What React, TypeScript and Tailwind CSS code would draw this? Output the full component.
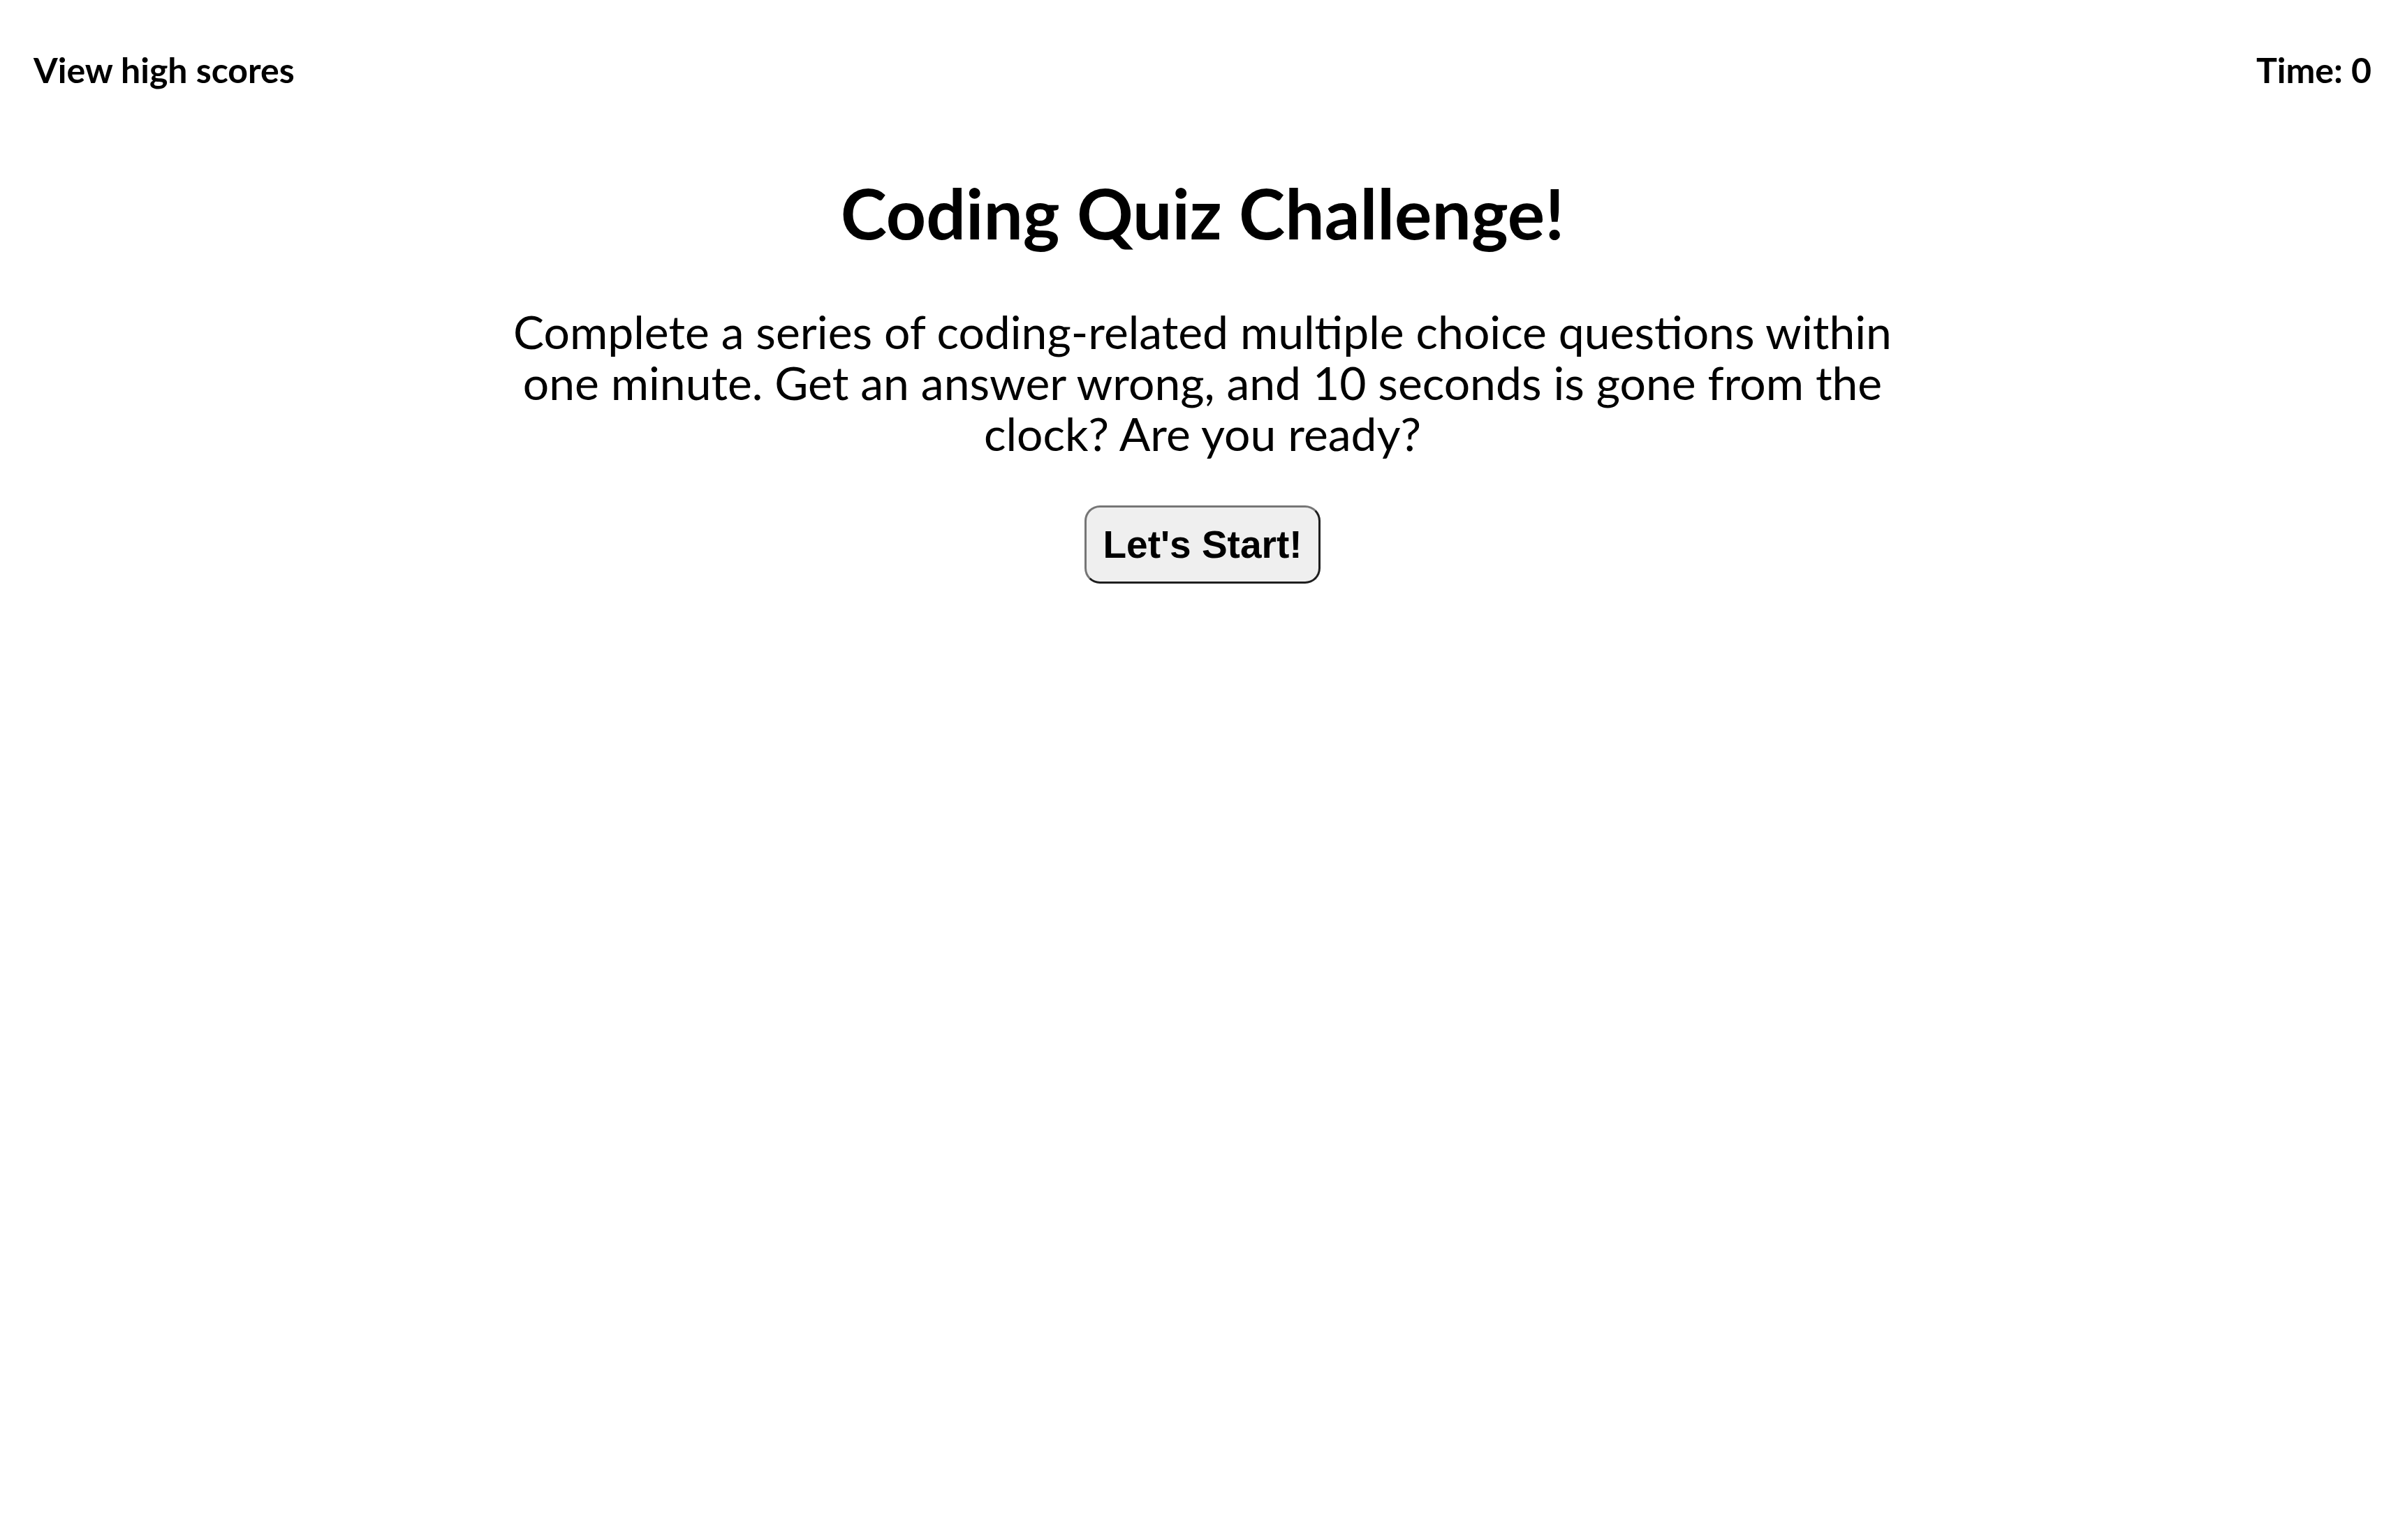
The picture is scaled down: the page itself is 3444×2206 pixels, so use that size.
const App = () => {
  return (
    <div className="min-h-screen bg-white text-black" style={{ fontFamily: 'Lato, "Open Sans", sans-serif' }}>
      <header className="flex items-center justify-between px-[48px] pt-[71px] text-[50px] font-bold leading-[58px]">
        <a href="#" className="text-black no-underline">View high scores</a>
        <span>Time: 0</span>
      </header>

      <main className="flex flex-col items-center">
        <h1 className="mt-[115px] text-[100px] font-bold leading-[120px]">Coding Quiz Challenge!</h1>
        <p className="mt-[74px] w-[2040px] text-center text-[66px] leading-[73px]">
          Complete a series of coding-related multiple choice questions within one minute. Get an answer wrong, and 10
          seconds is gone from the clock? Are you ready?
        </p>
        <button
          className="mt-[67px] rounded-[22px] border-[3px] border-t-[#767676] border-l-[#767676] border-b-[#1f1f1f] border-r-[#1f1f1f] bg-[#efefef] px-[23px] py-[21px] text-[55px] font-bold leading-[64px]"
          style={{ fontFamily: '"Liberation Sans", Arial, sans-serif' }}
        >
          Let's Start!
        </button>
      </main>
    </div>
  );
};

export default App;
